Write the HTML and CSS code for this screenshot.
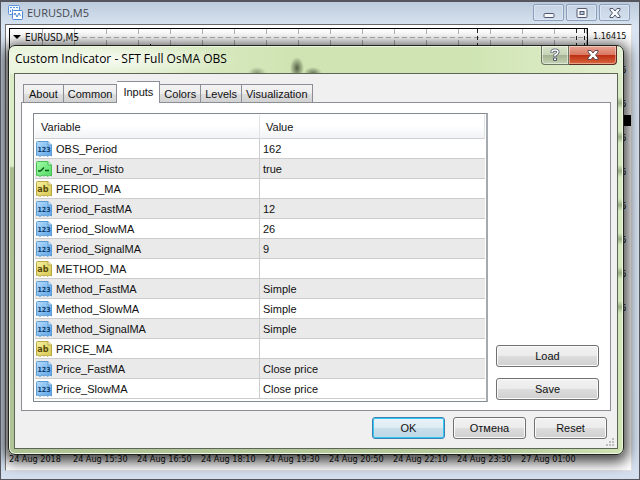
FILE: index.html
```
<!DOCTYPE html>
<html lang="en">
<head>
  <meta charset="UTF-8">
  <meta name="viewport" content="width=device-width, initial-scale=1.0">
  <title>EURUSD,M5</title>
  <link rel="stylesheet" href="styles.css">
</head>
<body>

<svg class="sprite" aria-hidden="true">
  <linearGradient id="blue" x1="0" y1="0" x2="1" y2="1">
    <stop offset="0" stop-color="#b5dcfb"/><stop offset="1" stop-color="#5ba3e6"/>
  </linearGradient>
  <linearGradient id="green" x1="0" y1="0" x2="1" y2="1">
    <stop offset="0" stop-color="#a4fba6"/><stop offset="1" stop-color="#4fdb62"/>
  </linearGradient>
  <linearGradient id="yellow" x1="0" y1="0" x2="1" y2="1">
    <stop offset="0" stop-color="#f6efa0"/><stop offset="1" stop-color="#d9c74f"/>
  </linearGradient>
  <symbol id="icon-int" viewBox="0 0 16 16">
    <path d="M.5 1.500q0-1 1-1H12l3.500 3.500V15l-2-1-1.500 1.500-2-1.500-2 1-2-1-2 1.500-2-1.500-1.500.5z" fill="url(#blue)" stroke="#5f9bd3"/>
    <path d="M12 .5v3.500h3.500" fill="#d6ebfc" stroke="#5f9bd3"/>
  </symbol>
  <symbol id="icon-bool" viewBox="0 0 16 16">
    <path d="M.5 1.500q0-1 1-1H12l3.500 3.500V15l-2-1-1.500 1.500-2-1.500-2 1-2-1-2 1.500-2-1.500-1.500.5z" fill="url(#green)" stroke="#48bd58"/>
    <path d="M12 .5v3.500h3.500" fill="#d0fbd2" stroke="#48bd58"/>
    <path d="M2 10h2.500L8 6.500M9 9.500h4" fill="none" stroke="#0c5a1c" stroke-width="1.500"/>
  </symbol>
  <symbol id="icon-string" viewBox="0 0 16 16">
    <path d="M.5 1.500q0-1 1-1H12l3.500 3.500V15l-2-1-1.500 1.500-2-1.500-2 1-2-1-2 1.500-2-1.500-1.500.5z" fill="url(#yellow)" stroke="#b9a944"/>
    <path d="M12 .5v3.500h3.500" fill="#fbf7cc" stroke="#b9a944"/>
  </symbol>
</svg>

<div class="window">
  <header class="window-title">
    <svg class="window-icon" width="15" height="15" viewBox="0 0 15 15" aria-hidden="true">
      <rect x=".5" y=".5" width="11" height="9" rx="1" fill="#eef6ff" stroke="#5b94df"/>
      <path d="M2 2.500h8M2.500 5v2M4.500 4v3" stroke="#5b94df" fill="none" stroke-dasharray="2 1"/>
      <rect x="4.500" y="5.500" width="10" height="9" rx="1" fill="#fff" stroke="#4a86d8"/>
      <path d="M6 10l1-2 2 4 2-4 1.500 3" stroke="#4a86d8" fill="none"/>
    </svg>
    <span class="window-name">EURUSD,M5</span>
    <div class="window-buttons">
      <button class="win-btn" aria-label="Minimize">
        <svg width="14" height="12" viewBox="0 0 14 12"><rect x="2" y="6.500" width="10" height="4" rx="1" fill="#f6f9fc" stroke="#54586e"/></svg>
      </button>
      <button class="win-btn" aria-label="Maximize">
        <svg width="14" height="12" viewBox="0 0 14 12"><rect x="2" y="1.500" width="10" height="9" rx="1" fill="#f6f9fc" stroke="#54586e"/><rect x="5" y="4.500" width="4" height="3" fill="#b9c9de" stroke="#54586e"/></svg>
      </button>
      <button class="win-btn" aria-label="Close">
        <svg width="14" height="12" viewBox="0 0 14 12"><path d="M2 1.500h3L7 4l2-2.500h3V3L9.500 6 12 9v1.500H9L7 8l-2 2.500H2V9l2.500-3L2 3z" fill="#f6f9fc" stroke="#54586e"/></svg>
      </button>
    </div>
  </header>

  <main class="client">
    <div class="chart">
      <div class="plot">
        <svg class="grid" width="100%" height="100%" aria-hidden="true">
          <defs>
            <pattern id="cells" width="32" height="32" patternUnits="userSpaceOnUse">
              <path d="M0 8.500h5M8 8.500h5M16 8.500h5M24 8.500h5" stroke="#b4b4b4"/>
              <path d="M.5 0v5M.5 11v5M.5 21v5" stroke="#b4b4b4"/>
            </pattern>
          </defs>
          <rect x="64" width="514" height="400" fill="url(#cells)"/>
          <path d="M32.500 0v5M32.500 11v5" stroke="#b4b4b4"/>
          <path d="M467.500 0v400M566.500 0v400M574.500 0v400" stroke="#222" stroke-dasharray="4 3"/>
          <path d="M140.500 15v30" stroke="#000"/>
        </svg>
        <div class="symbol-label">
          <svg width="8" height="4" viewBox="0 0 8 4" aria-hidden="true"><path d="M0 0h8L4 4z"/></svg>
          <span>EURUSD,M5</span>
        </div>
      </div>
      <div class="prices">
        <span>1.16415</span><span>1.16395</span><span>1.16375</span><span>1.16355</span>
        <span>1.16335</span><span>1.16315</span><span>1.16295</span><span>1.16275</span>
        <span>1.16255</span>
        <div class="price-now"></div>
      </div>
    </div>
    <div class="times">
      <span>24 Aug 2018</span><span>24 Aug 15:30</span><span>24 Aug 16:50</span>
      <span>24 Aug 18:10</span><span>24 Aug 19:30</span><span>24 Aug 20:50</span>
      <span>24 Aug 22:10</span><span>24 Aug 23:30</span><span>27 Aug 01:00</span>
    </div>
  </main>

  <section class="dialog" role="dialog" aria-labelledby="dialogTitle">
    <header class="dialog-title">
      <h1 id="dialogTitle">Custom Indicator - SFT Full OsMA OBS</h1>
      <div class="dialog-buttons">
        <button class="help-btn" aria-label="Help">
          <svg width="10" height="14" viewBox="0 0 10 14"><path d="M2 5V4q0-2 3-2t3 2q0 1.500-3 3v2" fill="none" stroke="#54586e" stroke-width="3"/><path d="M3.500 10h3v2.500h-3z" fill="#fff" stroke="#54586e"/><path d="M2 4.500V4q0-2 3-2t3 2q0 1.500-3 3v1.500" fill="none" stroke="#fff" stroke-width="1.500"/></svg>
        </button>
        <button class="close-btn" aria-label="Close">
          <svg width="14" height="12" viewBox="0 0 14 12"><path d="M2 1.500h3L7 4l2-2.500h3V3L9.500 6 12 9v1.500H9L7 8l-2 2.500H2V9l2.500-3L2 3z" fill="#fff" stroke="#5c4a55"/></svg>
        </button>
      </div>
    </header>

    <div class="dialog-body">
      <div class="tabs" role="tablist">
        <button class="tab" role="tab">About</button>
        <button class="tab" role="tab">Common</button>
        <button class="tab active" role="tab" aria-selected="true">Inputs</button>
        <button class="tab" role="tab">Colors</button>
        <button class="tab" role="tab">Levels</button>
        <button class="tab" role="tab">Visualization</button>
      </div>

      <div class="panel">
        <div class="list">
          <table>
            <thead>
              <tr><th class="name" scope="col">Variable</th><th scope="col">Value</th></tr>
            </thead>
            <tbody>
              <tr><td><div class="var"><svg class="icon"><use href="#icon-int"/><text class="icon-digits" x="8" y="11">123</text></svg>OBS_Period</div></td><td>162</td></tr>
              <tr><td><div class="var"><svg class="icon"><use href="#icon-bool"/></svg>Line_or_Histo</div></td><td>true</td></tr>
              <tr><td><div class="var"><svg class="icon"><use href="#icon-string"/><text class="icon-letters" x="7" y="11">ab</text></svg>PERIOD_MA</div></td><td></td></tr>
              <tr><td><div class="var"><svg class="icon"><use href="#icon-int"/><text class="icon-digits" x="8" y="11">123</text></svg>Period_FastMA</div></td><td>12</td></tr>
              <tr><td><div class="var"><svg class="icon"><use href="#icon-int"/><text class="icon-digits" x="8" y="11">123</text></svg>Period_SlowMA</div></td><td>26</td></tr>
              <tr><td><div class="var"><svg class="icon"><use href="#icon-int"/><text class="icon-digits" x="8" y="11">123</text></svg>Period_SignalMA</div></td><td>9</td></tr>
              <tr><td><div class="var"><svg class="icon"><use href="#icon-string"/><text class="icon-letters" x="7" y="11">ab</text></svg>METHOD_MA</div></td><td></td></tr>
              <tr><td><div class="var"><svg class="icon"><use href="#icon-int"/><text class="icon-digits" x="8" y="11">123</text></svg>Method_FastMA</div></td><td>Simple</td></tr>
              <tr><td><div class="var"><svg class="icon"><use href="#icon-int"/><text class="icon-digits" x="8" y="11">123</text></svg>Method_SlowMA</div></td><td>Simple</td></tr>
              <tr><td><div class="var"><svg class="icon"><use href="#icon-int"/><text class="icon-digits" x="8" y="11">123</text></svg>Method_SignalMA</div></td><td>Simple</td></tr>
              <tr><td><div class="var"><svg class="icon"><use href="#icon-string"/><text class="icon-letters" x="7" y="11">ab</text></svg>PRICE_MA</div></td><td></td></tr>
              <tr><td><div class="var"><svg class="icon"><use href="#icon-int"/><text class="icon-digits" x="8" y="11">123</text></svg>Price_FastMA</div></td><td>Close price</td></tr>
              <tr><td><div class="var"><svg class="icon"><use href="#icon-int"/><text class="icon-digits" x="8" y="11">123</text></svg>Price_SlowMA</div></td><td>Close price</td></tr>
            </tbody>
          </table>
        </div>
        <div class="side">
          <button class="btn">Load</button>
          <button class="btn">Save</button>
        </div>
      </div>

      <footer class="actions">
        <button class="btn default">OK</button>
        <button class="btn">Отмена</button>
        <button class="btn">Reset</button>
      </footer>
      <svg class="grip" width="8" height="8" viewBox="0 0 8 8" aria-hidden="true"><path d="M6 0h2v2H6zM6 3h2v2H6zM3 3h2v2H3zM6 6h2v2H6zM3 6h2v2H3zM0 6h2v2H0z" fill="#bdbdbd"/></svg>
    </div>
  </section>
</div>

</body>
</html>
```
FILE: styles.css
```
* {
  box-sizing: border-box;
}

body {
  margin: 0;
  font-family: "Liberation Sans", Arial, sans-serif;
  font-size: 11px;
  color: #111;
}

button {
  font: inherit;
  color: inherit;
  padding: 0;
}

.sprite {
  position: absolute;
  width: 0;
  height: 0;
}

.window {
  position: relative;
  display: flex;
  flex-direction: column;
  min-height: 100vh;
  padding: 0 7px 8px 4px;
  border: 1px solid #55555d;
  border-top-width: 2px;
  background: linear-gradient(#bccbdc, #d8e4f1 24px, #d3dfee);
  overflow: hidden;
}

.window-title {
  display: flex;
  height: 22px;
  padding-left: 3px;
}

.window-icon {
  margin-top: 3px;
}

.window-name {
  flex: 1;
  padding-left: 4px;
  font: 11px/22px "Open Sans", "Noto Sans", sans-serif;
  color: #44484e;
}

.window-buttons {
  display: flex;
  gap: 2px;
  padding: 2px 2px 3px 0;
}

.win-btn {
  display: flex;
  align-items: center;
  justify-content: center;
  width: 31px;
  border: 1px solid #8b9ebc;
  border-radius: 2px;
  background: linear-gradient(#c5d3e4, #d3dfed);
  box-shadow: inset 0 0 0 1px #dbe6f2;
}

.client {
  flex: 1;
  display: flex;
  flex-direction: column;
  padding: 3px 0 4px 3px;
  border: 1px solid #e2e2e2;
  border-top: 1px solid #666;
  border-left-color: #777;
  background: #fff;
}

.chart {
  flex: 1;
  display: flex;
}

.plot {
  position: relative;
  flex: 1;
  border: 1px solid #000;
}

.grid {
  position: absolute;
  left: 0;
  top: 0;
}

.symbol-label {
  position: relative;
  display: flex;
  align-items: center;
  gap: 4px;
  width: 75px;
  height: 16px;
  padding-left: 3px;
  font: 10px "DejaVu Sans Condensed", "DejaVu Sans", sans-serif;
}

.prices {
  position: relative;
  display: flex;
  flex-direction: column;
  gap: 22px;
  width: 43px;
  height: 400px;
  padding: 2px 0 0 5px;
  font: 9px/12px "DejaVu Sans Condensed", "DejaVu Sans", sans-serif;
}

.price-now {
  position: absolute;
  top: 87px;
  left: 4px;
  right: 0;
  height: 11px;
  background: #000;
}

.times {
  display: flex;
  height: 14px;
  font: 9px/14px "DejaVu Sans Condensed", "DejaVu Sans", sans-serif;
}

.times span {
  width: 64px;
  white-space: nowrap;
}

/* dialog floats over the chart window */
.dialog {
  position: absolute;
  top: 43px;
  left: 7px;
  right: 15px;
  bottom: 24px;
  display: flex;
  flex-direction: column;
  padding: 0 5px 5px;
  border: 1px solid #20241c;
  border-radius: 7px;
  background:
    radial-gradient(ellipse 7px 11px at 288px 22px, rgba(40, 50, 30, 0.75), transparent),
    radial-gradient(ellipse 9px 6px at 304px 27px, rgba(40, 50, 30, 0.6), transparent),
    radial-gradient(ellipse 9px 6px at 248px 27px, rgba(50, 60, 40, 0.45), transparent),
    radial-gradient(ellipse 130px 18px at 100px 14px, rgba(255, 255, 255, 0.75), transparent),
    linear-gradient(90deg, #e9f4dc, #d0e4b3 45%, #cfe4b2 75%, #e2efd0) top / 100% 28px no-repeat,
    linear-gradient(90deg, #b1c498, #b9cca0 80%, #cfe3b3) bottom / 100% 6px no-repeat,
    linear-gradient(#dcecc7, #dcecc7 120px, #a9bd8e 122px, #b1c498) left / 50% 100% no-repeat,
    repeating-linear-gradient(transparent 0 18px, rgba(90, 115, 75, 0.5) 24px, transparent 30px 34px) right 0 top 33px / 6px 238px no-repeat,
    linear-gradient(#dcebc8, #cfe3b3) right / 50% 100% no-repeat;
  box-shadow: inset 0 0 0 1px #edf6e2, 0 3px 14px 4px rgba(0, 0, 0, 0.75);
}

.dialog-title {
  display: flex;
  justify-content: space-between;
  height: 27px;
  padding: 0 1px;
}

.dialog-title h1 {
  margin: 0;
  font: 12px/26px "Open Sans", "Noto Sans", sans-serif;
  color: #000;
}

.dialog-buttons {
  display: flex;
  height: 19px;
}

.dialog-buttons button {
  display: flex;
  align-items: center;
  justify-content: center;
  border: 1px solid #6c7562;
  border-top: 0;
}

.dialog-buttons .help-btn {
  width: 28px;
  border-radius: 0 0 0 4px;
  background: linear-gradient(#d9e4ca, #c7d3b6 50%, #a5b292 51%, #c5d2b3);
  box-shadow: inset 0 0 0 1px rgba(255, 255, 255, 0.5);
}

.dialog-buttons .close-btn {
  width: 48px;
  border-color: #5c2a22;
  border-left: 0;
  border-radius: 0 0 4px 0;
  background: linear-gradient(#e9a594, #d9765f 50%, #bd2f13 51%, #d9673f);
  box-shadow: inset 0 0 0 1px rgba(255, 255, 255, 0.4);
}

.dialog-body {
  position: relative;
  flex: 1;
  display: flex;
  flex-direction: column;
  padding: 7px 6px 0;
  border: 1px solid #5d6654;
  background: #f0f0f0;
}

.tabs {
  display: flex;
  align-items: flex-end;
  height: 21px;
  padding-left: 2px;
}

.tab {
  height: 18px;
  padding: 0 4px;
  border: 1px solid #8b8e97;
  border-bottom: 0;
  border-left-width: 0;
  background: linear-gradient(#f3f3f3, #ececec 50%, #dedede 51%, #d2d2d2);
}

.tab:first-child {
  padding: 0 5px;
  border-left-width: 1px;
}

/* covers the panel border under the open tab */
.tab.active {
  position: relative;
  height: 22px;
  margin-bottom: -1px;
  padding: 0 6px 2px;
  background: #fff;
}

.panel {
  flex: 1;
  display: flex;
  gap: 8px;
  padding: 10px 11px 8px;
  border: 1px solid #8b8e97;
  background: #fff;
}

.list {
  flex: 1;
  padding: 1px;
  border: 1px solid #828790;
  border-right: 2px solid #a5a9b0;
}

table {
  width: 100%;
  border-collapse: separate;
  border-spacing: 0;
  table-layout: fixed;
}

th {
  height: 24px;
  padding: 0 0 0 6px;
  border-right: 1px solid #e0e2e5;
  border-bottom: 1px solid #d0d2d5;
  background: linear-gradient(#fff, #fff 45%, #f1f3f5);
  font-weight: normal;
  text-align: left;
}

th.name {
  width: 50%;
}

td {
  height: 20px;
  padding: 0 0 0 3px;
  border-bottom: 1px solid #ccc;
}

td:first-child {
  padding-left: 1px;
  border-right: 1px solid #ccc;
}

tbody tr:nth-child(even) {
  background: #eaeaea;
}

.var {
  display: flex;
  align-items: center;
  gap: 4px;
}

.icon {
  width: 16px;
  height: 16px;
}

.icon-digits {
  font: bold 7px "DejaVu Sans Condensed", sans-serif;
  text-anchor: middle;
  fill: #0d3c6e;
}

.icon-letters {
  font: bold 9px "DejaVu Sans Condensed", sans-serif;
  text-anchor: middle;
  fill: #544a08;
}

.side {
  display: flex;
  flex-direction: column;
  justify-content: flex-end;
  gap: 11px;
  width: 103px;
  padding-bottom: 2px;
}

.btn {
  height: 22px;
  border: 1px solid #707070;
  border-radius: 3px;
  background: linear-gradient(#f2f2f2, #ebebeb 50%, #dddddd 51%, #cfcfcf);
  box-shadow: inset 0 0 0 1px #fbfbfb;
}

.btn.default {
  border-color: #3c7fb1;
  background: linear-gradient(#eaf3f8, #deebf2 50%, #c9dfea 51%, #bcd8e6);
  box-shadow: inset 0 0 0 1px #33c9f2;
}

.actions {
  display: flex;
  justify-content: flex-end;
  gap: 8px;
  padding: 6px 4px 9px 0;
}

.actions .btn {
  width: 73px;
}

.grip {
  position: absolute;
  right: 3px;
  bottom: 2px;
}
```
